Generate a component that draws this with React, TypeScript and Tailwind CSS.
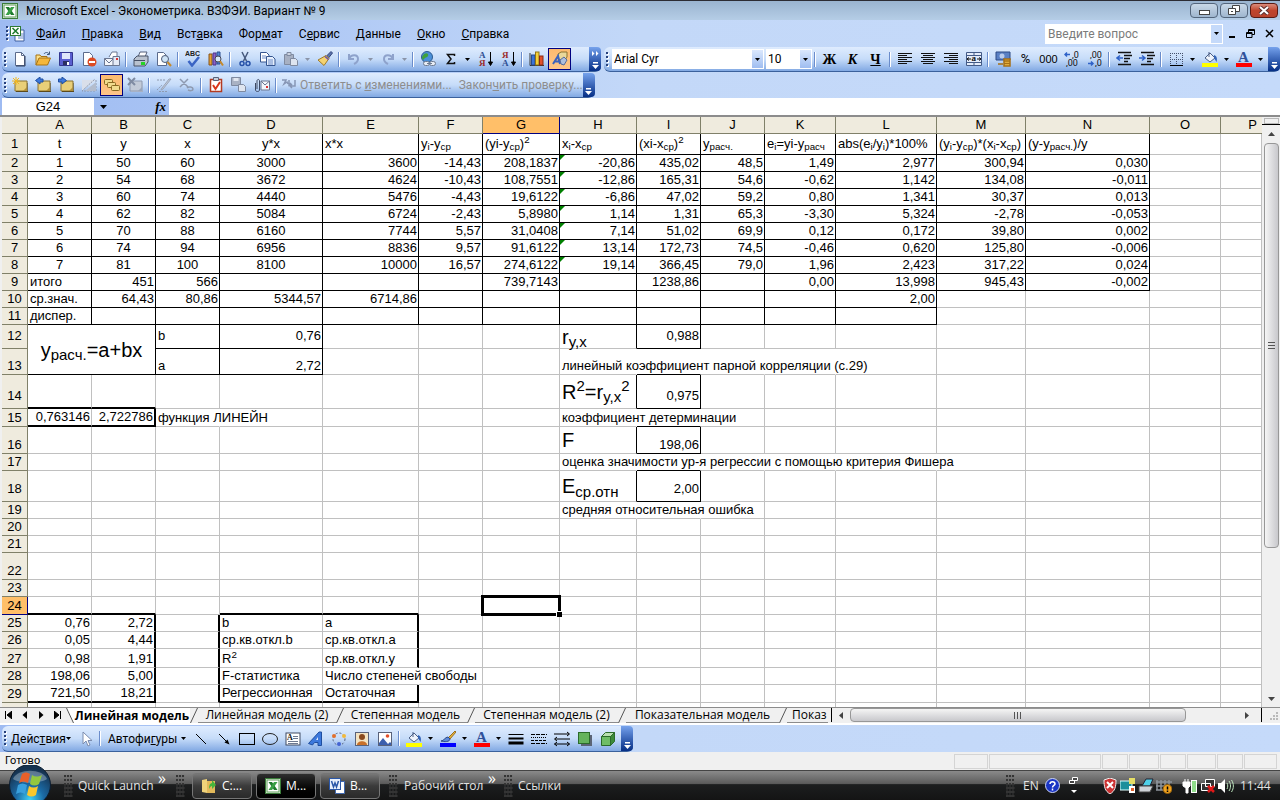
import React from 'react';

type Align = 'l' | 'c' | 'r';
type CellData = { v: React.ReactNode; a: Align; big?: boolean; col?: number; row?: number };

const COLS = ['A', 'B', 'C', 'D', 'E', 'F', 'G', 'H', 'I', 'J', 'K', 'L', 'M', 'N', 'O', 'P'];
const WIDTHS = [64, 64, 64, 103, 96, 64, 77, 77, 64, 64, 71, 101, 89, 124, 71];
const HEIGHTS = [21, 17, 17, 17, 17, 17, 17, 17, 17, 17, 17, 24, 26, 34, 18, 27, 17, 31, 17, 17, 17, 27, 17, 18, 17, 17, 19, 17, 17];

const HEADS: React.ReactNode[] = [
  't', 'y', 'x', 'y*x', 'x*x',
  <>y<sub>i</sub>-y<sub>ср</sub></>,
  <>(yi-y<sub>ср</sub>)<sup>2</sup></>,
  <>x<sub>i</sub>-x<sub>ср</sub></>,
  <>(xi-x<sub>ср</sub>)<sup>2</sup></>,
  <>y<sub>расч.</sub></>,
  <>e<sub>i</sub>=yi-y<sub>расч</sub></>,
  <>abs(e<sub>i</sub>/y<sub>i</sub>)*100%</>,
  <>(y<sub>i</sub>-y<sub>ср</sub>)*(x<sub>i</sub>-x<sub>ср</sub>)</>,
  <>(y-y<sub>расч.</sub>)/y</>,
];

const SERIES = [
  ['1', '50', '60', '3000', '3600', '-14,43', '208,1837', '-20,86', '435,02', '48,5', '1,49', '2,977', '300,94', '0,030'],
  ['2', '54', '68', '3672', '4624', '-10,43', '108,7551', '-12,86', '165,31', '54,6', '-0,62', '1,142', '134,08', '-0,011'],
  ['3', '60', '74', '4440', '5476', '-4,43', '19,6122', '-6,86', '47,02', '59,2', '0,80', '1,341', '30,37', '0,013'],
  ['4', '62', '82', '5084', '6724', '-2,43', '5,8980', '1,14', '1,31', '65,3', '-3,30', '5,324', '-2,78', '-0,053'],
  ['5', '70', '88', '6160', '7744', '5,57', '31,0408', '7,14', '51,02', '69,9', '0,12', '0,172', '39,80', '0,002'],
  ['6', '74', '94', '6956', '8836', '9,57', '91,6122', '13,14', '172,73', '74,5', '-0,46', '0,620', '125,80', '-0,006'],
  ['7', '81', '100', '8100', '10000', '16,57', '274,6122', '19,14', '366,45', '79,0', '1,96', '2,423', '317,22', '0,024'],
];

const cells: Record<string, CellData> = {
  A9: { v: 'итого', a: 'l' }, B9: { v: '451', a: 'r' }, C9: { v: '566', a: 'r' }, G9: { v: '739,7143', a: 'r' },
  I9: { v: '1238,86', a: 'r' }, K9: { v: '0,00', a: 'r' }, L9: { v: '13,998', a: 'r' }, M9: { v: '945,43', a: 'r' }, N9: { v: '-0,002', a: 'r' },
  A10: { v: 'ср.знач.', a: 'l' }, B10: { v: '64,43', a: 'r' }, C10: { v: '80,86', a: 'r' }, D10: { v: '5344,57', a: 'r' },
  E10: { v: '6714,86', a: 'r' }, L10: { v: '2,00', a: 'r' },
  A11: { v: 'диспер.', a: 'l' },
  A12: { v: <>y<sub>расч.</sub>=a+bx</>, a: 'c', big: true, col: 2, row: 2 },
  C12: { v: 'b', a: 'l' }, D12: { v: '0,76', a: 'r' }, H12: { v: <>r<sub>y,x</sub></>, a: 'l', big: true }, I12: { v: '0,988', a: 'r' },
  C13: { v: 'a', a: 'l' }, D13: { v: '2,72', a: 'r' }, H13: { v: 'линейный коэффициент парной корреляции (с.29)', a: 'l' },
  H14: { v: <>R<sup>2</sup>=r<sub>y,x</sub><sup>2</sup></>, a: 'l', big: true }, I14: { v: '0,975', a: 'r' },
  A15: { v: '0,763146', a: 'r' }, B15: { v: '2,722786', a: 'r' }, C15: { v: 'функция ЛИНЕЙН', a: 'l' }, H15: { v: 'коэффициент детерминации', a: 'l' },
  H16: { v: 'F', a: 'l', big: true }, I16: { v: '198,06', a: 'r' },
  H17: { v: 'оценка значимости ур-я регрессии с помощью критерия Фишера', a: 'l' },
  H18: { v: <>E<sub>ср.отн</sub></>, a: 'l', big: true }, I18: { v: '2,00', a: 'r' },
  H19: { v: 'средняя относительная ошибка', a: 'l' },
  A25: { v: '0,76', a: 'r' }, B25: { v: '2,72', a: 'r' }, D25: { v: 'b', a: 'l' }, E25: { v: 'a', a: 'l' },
  A26: { v: '0,05', a: 'r' }, B26: { v: '4,44', a: 'r' }, D26: { v: 'ср.кв.откл.b', a: 'l' }, E26: { v: 'ср.кв.откл.a', a: 'l' },
  A27: { v: '0,98', a: 'r' }, B27: { v: '1,91', a: 'r' }, D27: { v: <>R<sup>2</sup></>, a: 'l' }, E27: { v: 'ср.кв.откл.y', a: 'l' },
  A28: { v: '198,06', a: 'r' }, B28: { v: '5,00', a: 'r' }, D28: { v: 'F-статистика', a: 'l' }, E28: { v: 'Число степеней свободы', a: 'l' },
  A29: { v: '721,50', a: 'r' }, B29: { v: '18,21', a: 'r' }, D29: { v: 'Регрессионная', a: 'l' }, E29: { v: 'Остаточная', a: 'l' },
};
HEADS.forEach((v, i) => { cells[COLS[i] + '1'] = { v, a: i < 4 ? 'c' : 'l' }; });
SERIES.forEach((line, r) => line.forEach((v, i) => { cells[COLS[i] + (r + 2)] = { v, a: i < 4 ? 'c' : 'r' }; }));

const MERGED = ['B12', 'A13', 'B13'];
const BLACK_RIGHT = ['A12', 'C12', 'D12', 'C13', 'D13', 'H12', 'I12', 'H14', 'I14', 'H16', 'I16', 'H18', 'I18'];
const BLACK_BOTTOM = ['A12', 'C12', 'D12', 'C13', 'D13', 'I12', 'I13', 'I14', 'I15', 'I16', 'I17', 'I18'];
const THICK_RIGHT = ['B15', 'B25', 'B26', 'B27', 'B28', 'B29', 'C25', 'C26', 'C27', 'C28', 'C29', 'E25', 'E26', 'E27', 'E29'];
const THICK_BOTTOM = ['A14', 'B14', 'A15', 'B15', 'A24', 'B24', 'D24', 'E24', 'A29', 'B29', 'D29', 'E29'];
// long texts run over the lines of their neighbours
const NO_RIGHT = ['H13', 'I13', 'J13', 'K13', 'C15', 'H15', 'I15', 'H17', 'I17', 'J17', 'K17', 'L17', 'H19', 'I19', 'E28'];
// rows whose texts sit a little above the bottom line
const LIFTED = [12, 14, 18];

const borders = (id: string, row: number, col: number) => {
  const boxed = (row <= 9 && col < 14) || (row <= 11 && col < 12);
  let cls = '';
  if (THICK_RIGHT.includes(id)) cls += 'border-r-2 border-r-black ';
  else if (NO_RIGHT.includes(id)) cls += 'border-r border-r-transparent ';
  else if (boxed || BLACK_RIGHT.includes(id)) cls += 'border-r border-r-black ';
  else cls += 'border-r border-r-[#c0c0c0] ';
  if (THICK_BOTTOM.includes(id)) cls += 'border-b-2 border-b-black';
  else if (boxed || BLACK_BOTTOM.includes(id)) cls += 'border-b border-b-black';
  else cls += 'border-b border-b-[#c0c0c0]';
  return cls;
};

const ALIGN: Record<Align, string> = { l: 'text-left pl-[2px]', c: 'text-center', r: 'text-right pr-px' };

const Cell = ({ row, col }: { row: number; col: number }) => {
  const id = COLS[col] + row;
  if (MERGED.includes(id)) return null;
  const d = cells[id];
  const lift = LIFTED.includes(row) ? 'pb-1' : row === 1 ? 'pb-[2px]' : 'pb-0';
  return (
    <td
      colSpan={d?.col}
      rowSpan={d?.row}
      className={`relative p-0 whitespace-nowrap ${borders(id, row, col)} ${d ? ALIGN[d.a] : ''} ${d?.big ? 'align-middle text-[20px] leading-[22px]' : `align-bottom ${lift}`}`}
    >
      {d?.v}
      {col === 7 && row > 1 && row < 9 && (
        <svg className="absolute left-0 top-0 w-[5px] h-[5px]" viewBox="0 0 5 5"><path d="M0 0h5L0 5z" fill="#008000" /></svg>
      )}
      {id === 'G24' && (
        <span className="absolute -inset-[2px] z-10 border-[3px] border-black">
          <span className="absolute -right-[4px] -bottom-[4px] w-[6px] h-[6px] bg-white"></span>
          <span className="absolute -right-[4px] -bottom-[4px] w-[5px] h-[5px] bg-black"></span>
        </span>
      )}
    </td>
  );
};

const Svg = ({ children }: { children: React.ReactNode }) => (
  <svg className="w-4 h-4 shrink-0" viewBox="0 0 16 16" fill="none">{children}</svg>
);

const Tool = ({ label, active, children }: { label: string; active?: boolean; children: React.ReactNode }) => (
  <button
    aria-label={label}
    className={`w-[23px] h-[22px] shrink-0 flex items-center justify-center ${active ? 'border border-[#000080] bg-gradient-to-b from-[#fdbb6e] to-[#fec589]' : ''}`}
  >
    <Svg>{children}</Svg>
  </button>
);

const Triangle = ({ dim }: { dim?: boolean }) => (
  <svg className="w-[5px] h-[3px] shrink-0" viewBox="0 0 5 3"><path d="M0 0h5L2.5 3z" fill={dim ? '#8a94a8' : '#000'} /></svg>
);

const Drop = ({ label, dim }: { label: string; dim?: boolean }) => (
  <button aria-label={label} className="w-[11px] h-[22px] shrink-0 flex items-center justify-center"><Triangle dim={dim} /></button>
);

const Sep = () => <span className="w-[6px] shrink-0 flex justify-center"><span className="w-[2px] h-[15px] bg-[#6a8ccb] border-r border-white"></span></span>;

const Grip = () => (
  <span className="w-[6px] shrink-0 flex justify-center">
    <svg className="w-[3px] h-[15px]" viewBox="0 0 3 15">
      {[0, 4, 8, 12].map(y => <g key={y}><path d={`M1 ${y + 1}h2v2h-2z`} fill="#fff" /><path d={`M0 ${y}h2v2h-2z`} fill="#27417c" /></g>)}
    </svg>
  </span>
);

const Cap = ({ more }: { more?: boolean }) => (
  <button aria-label="Параметры панелей" className="ml-auto self-stretch w-[12px] shrink-0 rounded-r bg-gradient-to-b from-[#76a2ec] via-[#3b66b8] to-[#062f86] flex flex-col items-center justify-end pb-[2px] gap-[6px]">
    {more && <svg className="w-[7px] h-[5px]" viewBox="0 0 7 5"><path d="M0 0l2.500 2.500L0 5zM4 0l2.500 2.500L4 5z" fill="#fff" /></svg>}
    <svg className="w-[7px] h-[7px]" viewBox="0 0 7 7"><path d="M1 0h5v1.500H1zM0 3h7L3.500 7z" fill="#fff" /></svg>
  </button>
);

const BAR = 'flex items-center rounded-md border-b border-[#3b619c] bg-gradient-to-b from-[#dfecfe] via-[#c6dcf9] to-[#82a9e3]';

const ExcelMark = () => (
  <>
    <rect x="0.500" y="0.500" width="15" height="15" fill="#e9f4e6" stroke="#3b7d3a" />
    <rect x="2" y="2" width="12" height="12" fill="#fff" stroke="#5e9c5a" />
    <path d="M3.500 4h3.500l5.500 8H9z" fill="#1d7a2c" /><path d="M12.500 4H9L3.500 12H7z" fill="#3aa046" />
  </>
);

const Note = ({ dim }: { dim?: boolean }) => (
  <>
    <path d="M3 4h12v10H3z" fill={dim ? '#c3cbd8' : '#e9cf78'} stroke={dim ? '#8e9ab0' : '#8a7330'} />
    <path d="M4 14.500h12V6" stroke={dim ? '#a7b1c4' : '#5b4a1c'} />
    <path d="M11 14l4-4v4z" fill={dim ? '#9aa5b9' : '#b1903a'} />
  </>
);

const Bucket = () => (
  <>
    <path d="M3 7l5-5 5 5-5 4z" fill="#eef3fb" stroke="#4b5f86" /><path d="M7 1v5" stroke="#4b5f86" />
    <path d="M12 4c3 1 3.500 4 2.500 7-1-2-2-3-2.500-4z" fill="#3465b8" />
    <rect y="12" width="16" height="4" fill="#ff0" />
  </>
);

const Glyph = ({ x, y, s, fill, children }: { x: number; y: number; s: number; fill: string; children: string }) => (
  <text x={x} y={y} fontSize={s} fontWeight="700" fill={fill} className="font-['Liberation_Serif',serif]">{children}</text>
);

const Digits = ({ x, y, children }: { x: number; y: number; children: string }) => (
  <text x={x} y={y} fontSize="9" fill="#111" className="font-['Roboto',sans-serif]">{children}</text>
);

const FontColor = () => (
  <>
    <Glyph x={2} y={11} s={15} fill="#2f519a">A</Glyph>
    <rect y="12" width="16" height="4" fill="#f00" />
  </>
);

const SortArrow = () => <path d="M13.500 1v12M11.500 11l2 3.500 2-3.500z" stroke="#000" fill="#000" />;

const StandardBar = () => (
  <div className={`${BAR} w-[599px] h-[25px] shrink-0`} role="toolbar" aria-label="Стандартная">
    <Grip />
    <Tool label="Создать"><path d="M3.500 1.500h6l3 3v10h-9z" fill="#fff" stroke="#5b6b8c" /><path d="M9.500 1.500v3h3" stroke="#5b6b8c" /><path d="M13 5v10H4" stroke="#2e3c5a" /></Tool>
    <Tool label="Открыть"><path d="M1 14V4h4l1 1.500h6V8" fill="#fbe08a" stroke="#a87313" /><path d="M1 14l3-7h11.500l-3 7z" fill="#f5b73c" stroke="#a87313" /><path d="M9 3c1-2 4-2 5 0M14.500 0.500V3.500H12" stroke="#3d587f" /></Tool>
    <Tool label="Сохранить"><path d="M1.500 1.500h13v13h-13z" fill="#5a5fd0" stroke="#34378f" /><path d="M4 2h8v6H4z" fill="#dfe7fa" /><path d="M5 10h6v4H5z" fill="#2b2f62" /><path d="M9 11h2v3H9z" fill="#fff" /></Tool>
    <Tool label="Разрешения"><path d="M2.500 1.500h6l3 3v10h-9z" fill="#fff" stroke="#5b6b8c" /><circle cx="11" cy="11" r="4.500" fill="#dc4a22" /><path d="M8 10h6v2H8z" fill="#fff" /></Tool>
    <Tool label="Сообщение"><path d="M5 6l3-5h5v8" fill="#fff" stroke="#6b7791" /><path d="M0.500 7.500h9v7h-9z" fill="#f4f6fb" stroke="#6b7791" /><path d="M0.500 7.500L5 12l4.500-4.500" stroke="#6b7791" /><path d="M9 5.500h6.500v9H9z" fill="#e4eaf6" stroke="#6b7791" /><rect x="12" y="7" width="2" height="2" fill="#d33" /></Tool>
    <Sep />
    <Tool label="Печать"><path d="M5 6l2-5h7l-2 5" fill="#fff" stroke="#55617c" /><path d="M1 8l3-3h11v6l-3 4H1z" fill="#b9c2cf" stroke="#485267" /><path d="M1 9.500h11" stroke="#485267" /><rect x="8" y="11" width="4" height="3" fill="#25d425" /></Tool>
    <Tool label="Предварительный просмотр"><path d="M1.500 1.500h6l3 3v10h-9z" fill="#fff" stroke="#5b6b8c" /><circle cx="9" cy="8" r="3.500" fill="#cfe4f6" stroke="#4d5b78" /><path d="M11.500 11l3.500 4" stroke="#c68a2b" strokeWidth="2" /></Tool>
    <Sep />
    <Tool label="Орфография"><text x="0" y="5" fontSize="7" fontWeight="700" fill="#222" className="font-['Liberation_Sans',sans-serif]">ABC</text><path d="M3.500 10l3.500 4.500L14 6" stroke="#3a64c4" strokeWidth="2.500" /></Tool>
    <Tool label="Справочные материалы"><path d="M1 3h3v11H1z" fill="#e5a132" stroke="#87551d" /><path d="M5 2h3v12H5z" fill="#8a63c9" stroke="#4d348a" /><path d="M9 1h3v12H9z" fill="#5387d6" stroke="#2a4f91" /><circle cx="10" cy="8" r="3" fill="#d6e9f8" stroke="#445" /><path d="M12 10l3 4.500" stroke="#c68a2b" strokeWidth="2" /></Tool>
    <Sep />
    <Tool label="Вырезать"><path d="M5 1l4.500 9M11 1L6.500 10" stroke="#46597d" strokeWidth="1.500" /><circle cx="5" cy="12.500" r="2" stroke="#2751a8" strokeWidth="1.500" /><circle cx="11" cy="12.500" r="2" stroke="#2751a8" strokeWidth="1.500" /></Tool>
    <Tool label="Копировать"><path d="M0.500 1.500h6l2.500 2.500v7H0.500z" fill="#fff" stroke="#35558f" /><path d="M6.500 5.500h6l2.500 2.500v6.500H6.500z" fill="#e6effc" stroke="#35558f" /><path d="M8 9h5M8 11h5M8 13h5M2 5h4M2 7h4" stroke="#6d8cc8" /></Tool>
    <Tool label="Вставить"><path d="M1.500 3.500h9v10h-9z" fill="#a7b0c2" stroke="#7f8aa0" /><path d="M4 1.500h4v3H4z" fill="#ccd3e0" stroke="#7f8aa0" /><path d="M7.500 7.500h5l2 2v5h-7z" fill="#dde4f0" stroke="#7f8aa0" /></Tool>
    <Drop label="Варианты вставки" dim />
    <Tool label="Формат по образцу"><path d="M14 0.500l1.500 1.500-4 5-2-2z" fill="#5b74ae" stroke="#35477b" /><path d="M9 4.500l3 3-5 7L1 9z" fill="#f4d271" stroke="#a07a27" /><path d="M8 5.500l3.500 3" stroke="#6a4fb0" strokeWidth="1.500" /></Tool>
    <Sep />
    <Tool label="Отменить"><path d="M3 3v5h5M3 8c2-5 9-5 9 0 0 3-2 4-4 5" stroke="#8ea2cb" strokeWidth="2" /></Tool>
    <Drop label="Список отмены" dim />
    <Tool label="Вернуть"><path d="M13 3v5H8M13 8c-2-5-9-5-9 0 0 3 2 4 4 5" stroke="#8ea2cb" strokeWidth="2" /></Tool>
    <Drop label="Список возврата" dim />
    <Sep />
    <Tool label="Гиперссылка"><circle cx="7" cy="6" r="5.500" fill="#4a90d9" stroke="#2b5b90" /><path d="M4 3c3-2 5 0 4 2s-3 1-4 3-2 0-2-2z" fill="#3fa13c" /><rect x="3.500" y="10.500" width="6" height="4" rx="2" fill="#e8edf5" stroke="#6e7b90" /><rect x="9.500" y="10.500" width="6" height="4" rx="2" fill="#e8edf5" stroke="#6e7b90" /><path d="M7 12.500h5" stroke="#6e7b90" /></Tool>
    <Tool label="Автосумма"><path d="M11.500 5V3.500h-7L8 8l-3.500 4.500h7V11" stroke="#111" strokeWidth="1.500" /></Tool>
    <Drop label="Функции" />
    <Tool label="По возрастанию"><Glyph x={2} y={7} s={9} fill="#2d4f93">А</Glyph><Glyph x={2} y={15} s={9} fill="#9b2b2b">Я</Glyph><SortArrow /></Tool>
    <Tool label="По убыванию"><Glyph x={2} y={7} s={9} fill="#9b2b2b">Я</Glyph><Glyph x={2} y={15} s={9} fill="#2d4f93">А</Glyph><SortArrow /></Tool>
    <Sep />
    <Tool label="Мастер диаграмм"><path d="M1 2v12.500h14" stroke="#333" /><rect x="2.500" y="4" width="3.500" height="10" fill="#3c74d6" stroke="#274a8c" /><rect x="6.500" y="1" width="3.500" height="13" fill="#f6cf3a" stroke="#8f7415" /><rect x="10.500" y="5" width="3.500" height="9" fill="#e2502b" stroke="#8a2b14" /></Tool>
    <Tool label="Рисование" active><path d="M6 3l3-2h6v5l-2 3H7z" fill="#e9d79a" stroke="#8a7330" /><path d="M1 13L6 5l2 8M3 10.500h4" stroke="#3c62bd" strokeWidth="2" /><path d="M8 9l4-3 3 3-3 5-3-1z" fill="#aebedc" stroke="#56699a" /></Tool>
    <Cap more />
  </div>
);

const FormatBar = () => (
  <div className={`${BAR} flex-1 min-w-0 h-[25px]`} role="toolbar" aria-label="Форматирование">
    <Grip />
    <label className="relative ml-[2px] w-[152px] h-[20px] bg-white flex shrink-0">
      <select aria-label="Шрифт" className="appearance-none w-full px-[2px] text-[12px] leading-[20px] bg-transparent"><option>Arial Cyr</option></select>
      <span className="absolute right-px inset-y-px w-[11px] justify-center bg-gradient-to-b from-[#dbe8fd] to-[#9fbdf0] flex items-center pointer-events-none"><Triangle /></span>
    </label>
    <label className="relative ml-[2px] w-[46px] h-[20px] bg-white flex shrink-0">
      <select aria-label="Размер" className="appearance-none w-full px-[2px] text-[12px] leading-[20px] bg-transparent"><option>10</option></select>
      <span className="absolute right-px inset-y-px w-[11px] justify-center bg-gradient-to-b from-[#dbe8fd] to-[#9fbdf0] flex items-center pointer-events-none"><Triangle /></span>
    </label>
    <Sep />
    <button className="w-[23px] text-center font-bold font-['Liberation_Serif',serif] text-[14px]">Ж</button>
    <button className="w-[23px] text-center font-bold italic font-['Liberation_Serif',serif] text-[14px]">К</button>
    <button className="w-[23px] text-center font-bold underline font-['Liberation_Serif',serif] text-[14px]">Ч</button>
    <Sep />
    <Tool label="По левому краю"><path d="M1 2.500h14M1 4.500h9M1 6.500h14M1 8.500h9M1 10.500h14M1 12.500h9" stroke="#111" /></Tool>
    <Tool label="По центру"><path d="M1 2.500h14M3 4.500h10M1 6.500h14M3 8.500h10M1 10.500h14M3 12.500h10" stroke="#111" /></Tool>
    <Tool label="По правому краю"><path d="M1 2.500h14M6 4.500h9M1 6.500h14M6 8.500h9M1 10.500h14M6 12.500h9" stroke="#111" /></Tool>
    <Tool label="Объединить и поместить в центре"><path d="M0.500 1.500h15v13H0.500zM0.500 4.500h15M0.500 11.500h15M8 1v3M8 12v3" fill="#e4ecfa" stroke="#435a86" /><path d="M1 8h4M15 8h-4M3 6.500L1 8l2 1.500M13 6.500L15 8l-2 1.500" stroke="#111" /><Glyph x={5.5} y={10} s={9} fill="#111">a</Glyph></Tool>
    <Sep />
    <Tool label="Денежный формат"><path d="M1 1h14v8H1z" fill="#5a80c4" stroke="#2c4a86" /><circle cx="7" cy="5" r="2.500" fill="#b9cbec" /><path d="M9 8h6v7H9zM9 10h6M9 12.500h6M3 13h5" fill="#f2c14b" stroke="#a66f15" strokeWidth="1.500" /></Tool>
    <button className="w-[23px] text-center text-[13px]">%</button>
    <button className="w-[23px] text-center text-[11px] font-['Liberation_Sans_Narrow','Liberation_Sans',sans-serif]">000</button>
    <Tool label="Увеличить разрядность"><path d="M6 3.500H1M3 1.500l-2 2 2 2" stroke="#2f62c8" strokeWidth="1.500" /><Digits x={8} y={7}>,0</Digits><Digits x={2} y={15}>,00</Digits></Tool>
    <Tool label="Уменьшить разрядность"><path d="M1 12.500h5M4 10.500l2 2-2 2" stroke="#2f62c8" strokeWidth="1.500" /><Digits x={3} y={7}>,00</Digits><Digits x={8} y={15}>,0</Digits></Tool>
    <Sep />
    <Tool label="Уменьшить отступ"><path d="M2 1.500h13M8 4.500h8M8 7.500h6M8 10.500h4M2 13.500h13" stroke="#111" strokeWidth="1.500" /><path d="M7 7H2M4 4.500L1 7l3 2.500" stroke="#2f62c8" strokeWidth="1.500" /></Tool>
    <Tool label="Увеличить отступ"><path d="M2 1.500h13M8 4.500h8M8 7.500h6M8 10.500h4M2 13.500h13" stroke="#111" strokeWidth="1.500" /><path d="M0 7h5M3 4.500L6 7 3 9.500" stroke="#2f62c8" strokeWidth="1.500" /></Tool>
    <Sep />
    <Tool label="Границы"><path d="M2.500 2v12M8.500 2v12M14.500 2v12M2 2.500h13M2 8.500h13" stroke="#44506c" strokeDasharray="1 1" /><path d="M2 14.500h13" stroke="#000" /></Tool>
    <Drop label="Виды границ" />
    <Tool label="Цвет заливки"><Bucket /></Tool>
    <Drop label="Цвета заливки" />
    <Tool label="Цвет шрифта"><FontColor /></Tool>
    <Drop label="Цвета шрифта" />
    <Cap />
  </div>
);

const ReviewBar = () => (
  <div className={`${BAR} w-[592px] h-[25px]`} role="toolbar" aria-label="Рецензирование">
    <Grip />
    <Tool label="Создать примечание"><Note /><path d="M4 0v8M0 4h8M1 1l6 6M7 1L1 7" stroke="#f4b81e" /></Tool>
    <Tool label="Предыдущее примечание"><Note /><path d="M8 2H5V0L0.500 3.500 5 7V5h3z" fill="#3c78dc" stroke="#1f4e9f" /></Tool>
    <Tool label="Следующее примечание"><Note /><path d="M0.500 2H4V0l4.500 3.500L4 7V5H0.500z" fill="#3c78dc" stroke="#1f4e9f" /></Tool>
    <Tool label="Показать примечание"><path d="M1 14V3h14z" fill="#d9dfea" /><path d="M1 14L14 2M15 3v11H1" stroke="#8e9ab0" strokeDasharray="2 1" /><path d="M4 14l11-9v9z" fill="#b4bdcd" /></Tool>
    <Tool label="Показать все примечания" active><rect x="0.500" y="2.500" width="8" height="5" rx="1" fill="#f1dc8e" stroke="#8a6a22" /><rect x="3.500" y="5.500" width="8" height="5" rx="1" fill="#f1dc8e" stroke="#8a6a22" /><rect x="7.500" y="8.500" width="8" height="5" rx="1" fill="#f1dc8e" stroke="#8a6a22" /></Tool>
    <Tool label="Удалить примечание"><Note dim /><path d="M1 1l7 7M8 1L1 8" stroke="#7f8ba2" strokeWidth="2" /></Tool>
    <Sep />
    <Tool label="Рукописные примечания"><path d="M1 3h9M1 13l5-5M3 14.500h9" stroke="#8e9ab0" strokeDasharray="2 1" /><path d="M15 2l-8 10-2 1 1-2 7-9z" fill="#c3cbd8" stroke="#9aa5b9" /></Tool>
    <Tool label="Удалить рукописные"><path d="M1 2l8 8M9 2L1 10M8 11c2-2 6-1 6 1s-3 2-5 1" stroke="#8e9ab0" strokeWidth="1.500" /></Tool>
    <Sep />
    <Tool label="Создать задачу"><path d="M2.500 2.500h11v12h-11z" fill="#fff" stroke="#b23b21" strokeWidth="1.500" /><path d="M5.500 0.500h5v3h-5z" fill="#c9cfdb" stroke="#59627a" /><path d="M5 8l2.500 4L12 5" stroke="#d9361a" strokeWidth="2" /></Tool>
    <Tool label="Обновить файл"><path d="M0.500 0.500h9v8h-9z" fill="#a9b2c3" stroke="#7f8aa0" /><path d="M2.500 1h5v3h-5z" fill="#e1e6ef" /><path d="M7.500 7.500h5l2 2v5h-7z" fill="#dfe5ef" stroke="#7f8aa0" /></Tool>
    <Tool label="Отправить"><path d="M7 4h8.500v9H7z" fill="#f4f6fb" stroke="#6b7791" /><path d="M7 4l4 4 4.500-4" stroke="#6b7791" /><rect x="12" y="9" width="2" height="2" fill="#d33" /><path d="M1.500 6v7c0 2 4 2 4 0V4c0-2-2.500-2-2.500 0v8" stroke="#3e4a63" /></Tool>
    <Sep />
    <button disabled className="flex items-center h-[22px] text-[12px] text-[#8d8d8d] whitespace-nowrap pl-[2px]">
      <Svg><path d="M1 3h4l-2 4 3-2 1 2M8 3v5l2-2M14 3v6H9M11 7L9 9l2 2" stroke="#8796b5" strokeWidth="1.500" /></Svg>
      <span className="pl-[3px]">Ответить с <u>и</u>зменениями...</span>
    </button>
    <button disabled className="pl-[7px] h-[22px] text-[12px] text-[#8d8d8d] whitespace-nowrap">Закон<u>ч</u>ить проверку...</button>
    <Cap />
  </div>
);

const DrawingBar = () => (
  <div className={`${BAR} w-[631px] h-[26px]`} role="toolbar" aria-label="Рисование">
    <Grip />
    <button className="w-[66px] text-[12px] whitespace-nowrap flex items-center justify-between px-[3px]"><span>Дейс<u>т</u>вия</span><Triangle /></button>
    <Tool label="Выбор объектов"><path d="M5 1v12l3-3 2 5 2-1-2-4.500h4z" fill="#fff" stroke="#7b8cae" /></Tool>
    <Sep />
    <button className="w-[86px] text-[12px] whitespace-nowrap flex items-center justify-between pl-[5px] pr-[3px]"><span>Автофи<u>г</u>уры</span><Triangle /></button>
    <Tool label="Линия"><path d="M3 3l10 10" stroke="#000" /></Tool>
    <Tool label="Стрелка"><path d="M3 3l8 8" stroke="#000" /><path d="M13.500 13.500l-5-2 3-3z" fill="#000" /></Tool>
    <Tool label="Прямоугольник"><rect x="0.500" y="2.500" width="15" height="11" stroke="#000" /></Tool>
    <Tool label="Овал"><ellipse cx="8" cy="8" rx="7.500" ry="5.500" stroke="#222" /></Tool>
    <Tool label="Надпись"><rect x="1" y="2" width="14" height="12" fill="#fff" stroke="#3e4a63" /><Glyph x={2} y={9} s={8} fill="#111">A</Glyph><path d="M8 5.500h5M8 7.500h5M3 10.500h10M3 12.500h10" stroke="#6d7890" /></Tool>
    <Tool label="Объект WordArt"><path d="M0.500 12.500L11 1h2.500v13.500H10v-3H6.500l-2 2.500z" fill="#3c78dc" stroke="#1f4e9f" /><path d="M8 9h2V6z" fill="#dfeafc" /></Tool>
    <Tool label="Схема"><circle cx="8" cy="8" r="6" stroke="#55617c" strokeDasharray="2 2" /><circle cx="3" cy="5" r="2" fill="#e2702b" /><circle cx="13" cy="5" r="2" fill="#f2b93b" /><circle cx="8" cy="13" r="2" fill="#4464d4" /></Tool>
    <Tool label="Картинка"><rect x="1.500" y="1.500" width="13" height="13" fill="#f3e3c2" stroke="#59627a" /><circle cx="8" cy="6" r="3" fill="#8a4a1e" /><path d="M3 14c0-5 10-5 10 0z" fill="#c8702a" /></Tool>
    <Tool label="Рисунок"><rect x="1.500" y="1.500" width="13" height="13" fill="#fff" stroke="#59627a" /><circle cx="10.500" cy="5" r="1.800" fill="#e2502b" /><path d="M2 12l4-5 5 6 2-2 1 1v2H2z" fill="#3c5fae" /></Tool>
    <Sep />
    <Tool label="Цвет заливки фигуры"><Bucket /></Tool>
    <Drop label="Цвета заливки фигуры" />
    <Tool label="Цвет линий"><path d="M15 0l1 1-6 7-2-1z" fill="#e5b23c" stroke="#9a7020" /><path d="M1 10c3 0 4-4 7-4l2 2c0 3-6 3-9 2z" fill="#5d88d8" stroke="#2c4a86" /><rect y="12" width="16" height="4" fill="#00f" /></Tool>
    <Drop label="Цвета линий" />
    <Tool label="Цвет текста"><FontColor /></Tool>
    <Drop label="Цвета текста" />
    <Tool label="Тип линии"><path d="M0.500 3.500h15" stroke="#000" /><path d="M0.500 7.500h15" stroke="#000" strokeWidth="2" /><path d="M0.500 12h15" stroke="#000" strokeWidth="3" /></Tool>
    <Tool label="Тип штриха"><path d="M0 3.500h16M0 12.500h16" stroke="#000" strokeDasharray="4 1" /><path d="M0 6.500h16" stroke="#000" strokeDasharray="1 1" /><path d="M0 9.500h16" stroke="#000" strokeDasharray="3 1" /></Tool>
    <Tool label="Вид стрелки"><path d="M0 3h15M13 1l2.500 2L13 5M16 8H1M3 6L.5 8 3 10M0.500 13h15M13 11l2.500 2-2.500 2M3 11L.5 13 3 15" stroke="#000" /></Tool>
    <Tool label="Тень"><rect x="4" y="4" width="11" height="11" fill="#5b6475" /><rect x="1.500" y="1.500" width="11" height="11" fill="#64b35d" stroke="#2b6b2b" /></Tool>
    <Tool label="Объем"><path d="M1.500 5.500h9v9h-9z" fill="#6fbd66" stroke="#2b6b2b" /><path d="M1.500 5.500l4-4h9l-4 4z" fill="#b9e0b0" stroke="#2b6b2b" /><path d="M10.500 14.500l4-4v-9l-4 4z" fill="#3c8a3a" stroke="#2b6b2b" /></Tool>
    <Cap />
  </div>
);

const MENU: [string, string, string][] = [
  ['', 'Ф', 'айл'], ['', 'П', 'равка'], ['', 'В', 'ид'], ['Вст', 'а', 'вка'], ['Фор', 'м', 'ат'],
  ['С', 'е', 'рвис'], ['', 'Д', 'анные'], ['', 'О', 'кно'], ['', 'С', 'правка'],
];

const Header = () => (
  <header>
    <div className="h-[20px] flex items-center border-t border-[#2c2c34] bg-gradient-to-b from-[#9ab4d0] to-[#b5cde6] pr-[2px]">
      <span className="pl-[2px] flex"><Svg><ExcelMark /></Svg></span>
      <h1 className="flex-1 pl-2 text-[12px] leading-[18px]">Microsoft Excel - Эконометрика. ВЗФЭИ. Вариант № 9</h1>
      <div className="flex gap-[2px]">
        <button aria-label="Свернуть" className="w-[28px] h-[15px] rounded-sm border border-[#53657c] bg-gradient-to-b from-[#c9d8e8] to-[#9fb6cf] flex justify-center items-end pb-[2px]"><span className="w-[11px] h-[5px] border border-[#444] bg-white"></span></button>
        <button aria-label="Развернуть" className="w-[28px] h-[15px] rounded-sm border border-[#53657c] bg-gradient-to-b from-[#c9d8e8] to-[#9fb6cf] flex justify-center items-center"><svg className="w-[12px] h-[11px]" viewBox="0 0 12 11"><path d="M4.500 0.500h7v6h-7z" fill="#fff" stroke="#444" /><path d="M0.500 3.500h7v6h-7z" fill="#fff" stroke="#444" /><path d="M3 6h2v1H3z" fill="#444" /></svg></button>
        <button aria-label="Закрыть" className="w-[28px] h-[15px] rounded-sm border border-[#5a1a12] bg-gradient-to-b from-[#d98b7c] via-[#c0452c] to-[#b8432c] flex justify-center items-center"><svg className="w-[12px] h-[9px]" viewBox="0 0 12 9"><path d="M2 1l8 7M10 1L2 8" stroke="#5a3030" strokeWidth="4" /><path d="M2 1l8 7M10 1L2 8" stroke="#fff" strokeWidth="2" /></svg></button>
      </div>
    </div>
    <div className="bg-gradient-to-r from-[#9ebbf2] via-[#c3d8f8] to-[#c5dafa]">
      <nav className="h-[27px] flex items-center pl-[4px]">
        <Grip />
        <span className="flex w-[18px]"><Svg><path d="M5 4h9v11H5z" fill="#fff" stroke="#3f5f9f" /><path d="M8 8h6M8 10h6M8 12h6" stroke="#6d8cc8" /><rect x="0.500" y="0.500" width="10" height="9" fill="#fff" stroke="#2f7a35" /><path d="M2.500 2l6 6M8.500 2l-6 6" stroke="#1d7a2c" strokeWidth="1.500" /></Svg></span>
        <ul className="flex text-[12px] leading-[18px] pl-[8px] gap-[16px]">
          {MENU.map(([a, b, c]) => <li key={a + b + c}><button>{a}<u>{b}</u>{c}</button></li>)}
        </ul>
        <label className="relative ml-auto w-[178px] h-[20px] bg-white flex">
          <input aria-label="Введите вопрос" placeholder="Введите вопрос" className="w-full px-[3px] text-[12px] leading-[18px] placeholder:text-[#7b7b7b]" />
          <span className="absolute right-px inset-y-px w-[11px] justify-center bg-[#c5dafa] flex items-center"><Triangle /></span>
        </label>
        <div className="flex items-center gap-[10px] pl-[5px] pr-[6px]">
          <button aria-label="Свернуть книгу"><svg className="w-[8px] h-[9px]" viewBox="0 0 8 9"><path d="M1 7h6v2H1z" fill="#000" /></svg></button>
          <button aria-label="Восстановить книгу"><svg className="w-[9px] h-[9px]" viewBox="0 0 9 9" fill="none"><path d="M2.500 3V.5h6v5H6M2 1.500h6M.5 3.500H6v5H.5zM0 4.500h6" stroke="#000" /></svg></button>
          <button aria-label="Закрыть книгу"><svg className="w-[9px] h-[9px]" viewBox="0 0 9 9"><path d="M1 1l7 7M8 1L1 8" stroke="#000" strokeWidth="1.500" /></svg></button>
        </div>
      </nav>
      <div className="flex gap-[3px] pl-[2px]"><StandardBar /><FormatBar /></div>
      <div className="pl-[2px] pt-px"><ReviewBar /></div>
      <div className="h-[17px] flex">
        <input aria-label="Имя" defaultValue="G24" className="w-[92px] ml-[2px] bg-white text-center text-[13px] leading-[16px] font-['Liberation_Sans',Arial,sans-serif]" />
        <span className="w-[18px] flex justify-center items-center"><svg className="w-[7px] h-[4px]" viewBox="0 0 7 4"><path d="M0 0h7L3.500 4z" fill="#000" /></svg></span>
        <button aria-label="Вставка функции" className="w-[57px] pr-[3px] text-right italic font-bold text-[13px] leading-[16px] font-['Liberation_Serif',serif]">fx</button>
        <input aria-label="Строка формул" className="flex-1 bg-white" />
      </div>
    </div>
  </header>
);

const HEAD = 'border-[#808069] font-normal p-0';

const Sheet = () => (
  <div className="flex border-t-2 border-[#8c8c8c] pl-[2px] bg-[#f0f0f0] font-['Liberation_Sans',Arial,sans-serif] text-[13px] leading-[16px]">
    <table className="flex-1 min-w-0 w-full table-fixed border-separate border-spacing-0 bg-white">
      <colgroup>
        <col className="w-[26px]" />
        {WIDTHS.map((w, i) => <col key={i} style={{ width: w }} />)}
        <col />
      </colgroup>
      <thead>
        <tr className="h-[17px] bg-[#efebde]">
          <th className={`${HEAD} border-r border-b`}></th>
          {COLS.map(c => (
            <th key={c} scope="col" className={`${HEAD} border-b ${c === 'P' ? 'pl-[22px]' : 'border-r'} ${c === 'G' ? 'bg-[#ffbf69] border-b-[#000080] border-r-[#000080]' : ''}`}>{c}</th>
          ))}
        </tr>
      </thead>
      <tbody>
        {HEIGHTS.map((h, i) => (
          <tr key={i} style={{ height: h }}>
            <th scope="row" className={`${HEAD} border-r border-b align-bottom ${LIFTED.includes(i + 1) ? 'pb-1' : i === 0 ? 'pb-[2px]' : ''} ${i === 23 ? 'bg-[#ffbf69] border-b-[#000080] border-r-[#000080]' : 'bg-[#efebde]'}`}>{i + 1}</th>
            {COLS.map((c, j) => <Cell key={c} row={i + 1} col={j} />)}
          </tr>
        ))}
        <tr className="h-[4px]">
          <th className={`${HEAD} border-r bg-[#efebde]`}></th>
          {COLS.map(c => <td key={c} className="p-0 border-r border-[#c0c0c0]"></td>)}
        </tr>
      </tbody>
    </table>
    <div className="w-[18px] shrink-0 flex flex-col items-center">
      <span className="w-[15px] h-[6px] mt-px border border-[#b8b8b8] bg-[#f0f0f0]"></span>
      <span className="w-full h-px bg-black"></span>
      <button aria-label="Вверх" className="w-full h-[18px] flex justify-center items-center"><svg className="w-[7px] h-[4px]" viewBox="0 0 7 4"><path d="M0 4h7L3.500 0z" fill="#444" /></svg></button>
      <button aria-label="Прокрутка" className="w-[15px] h-[405px] border border-[#979797] rounded-sm bg-gradient-to-r from-[#f5f5f5] to-[#c8c8cc] flex items-center justify-center">
        <svg className="w-[7px] h-[8px]" viewBox="0 0 7 8"><path d="M0 .5h7M0 3.500h7M0 6.500h7" stroke="#555" /></svg>
      </button>
      <button aria-label="Вниз" className="mt-auto w-full h-[16px] flex justify-center items-center"><svg className="w-[7px] h-[4px]" viewBox="0 0 7 4"><path d="M0 0h7L3.500 4z" fill="#444" /></svg></button>
    </div>
  </div>
);

const Slash = ({ back }: { back?: boolean }) => (
  <svg className="w-[8px] h-[15px] shrink-0" viewBox="0 0 8 15"><path d={back ? 'M0 0l7 15h1V0z' : 'M0 0h8L1 15H0z'} fill={back ? '#fff' : 'none'} /><path d={back ? 'M0.500 0l7 15' : 'M7.500 0l-7 15'} stroke="#555" /></svg>
);

const SHEETS: [string, string][] = [
  ['Линейная модель (2)', 'w-[138px]'],
  ['Степенная модель', 'w-[123px]'],
  ['Степенная модель (2)', 'w-[143px]'],
  ['Показательная модель', 'w-[153px]'],
];

const TabBar = () => (
  <div className="h-[18px] flex items-start border-t border-[#8c8c8c] bg-[#f0f0f0] border-b-2 border-b-white text-[12px] leading-[14px]">
    <div className="flex w-[66px] h-[14px] items-center justify-around shrink-0">
      {['M1.500 0v8M8 0v8L3 4z', 'M6 0v8L1.500 4z', 'M2 0v8L6.500 4z', 'M6.500 0v8M0 0v8l5-4z'].map((d, i) => (
        <button key={d} aria-label={['К первому листу', 'Назад', 'Вперед', 'К последнему листу'][i]}><svg className="w-[8px] h-[8px]" viewBox="0 0 8 8"><path d={d} fill="#000" stroke={i % 3 === 0 ? '#000' : 'none'} strokeWidth="1" /></svg></button>
      ))}
    </div>
    <Slash back />
    <button className="w-[116px] h-[15px] shrink-0 bg-white font-bold whitespace-nowrap text-center">Линейная модель</button>
    <Slash />
    {SHEETS.map(([name, w]) => (
      <React.Fragment key={name}>
        <button className={`${w} shrink-0 whitespace-nowrap text-center border-b border-[#8c8c8c]`}>{name}</button>
        <Slash />
      </React.Fragment>
    ))}
    <button className="w-[41px] shrink-0 pl-[5px] text-left whitespace-nowrap border-b border-[#8c8c8c]">Показ</button>
    <span className="w-[4px] h-[14px] shrink-0 border-r border-black"></span>
    <div className="flex-1 flex h-[14px] items-center min-w-0">
      <button aria-label="Влево" className="w-[18px] flex justify-center"><svg className="w-[4px] h-[7px]" viewBox="0 0 4 7"><path d="M4 0v7L0 3.500z" fill="#444" /></svg></button>
      <button aria-label="Прокрутка листа" className="flex-[333] h-full rounded-sm border border-[#979797] bg-gradient-to-b from-[#f5f5f5] to-[#c8c8cc] flex items-center justify-center"><svg className="w-[8px] h-[7px]" viewBox="0 0 8 7"><path d="M.5 0v7M3.500 0v7M6.500 0v7" stroke="#555" /></svg></button>
      <span className="flex-[52]"></span>
      <button aria-label="Вправо" className="w-[18px] flex justify-center"><svg className="w-[4px] h-[7px]" viewBox="0 0 4 7"><path d="M0 0v7l4-3.500z" fill="#444" /></svg></button>
      <span className="w-[6px] h-full border-r border-black"></span>
    </div>
    <svg className="w-[18px] h-[14px] shrink-0" viewBox="0 0 18 14"><path d="M14 4h2v2h-2zM11 7h2v2h-2zM14 7h2v2h-2zM8 10h2v2H8zM11 10h2v2h-2zM14 10h2v2h-2z" fill="#b9b9b9" /></svg>
  </div>
);

const Dots = () => (
  <svg className="w-[9px] h-[22px] shrink-0" viewBox="0 0 9 22">
    {[0, 4, 8, 12, 16, 20].map(y => [0, 3, 6].map(x => <path key={`${x}-${y}`} d={`M${x} ${y}h2v2h-2z`} fill="#1a1a1a" stroke="#666" strokeWidth=".4" />))}
  </svg>
);

const TASK = 'w-[60px] h-[26px] rounded-sm border border-[#767676] flex items-center gap-[5px] pl-[8px] text-white';

const Taskbar = () => (
  <footer className="h-[30px] flex items-center border-t border-[#444] bg-[linear-gradient(#8a8a8a,#5c5c5c_43%,#1c1e1f_47%,#141414)] text-[#e4e4e4] text-[12px] font-['Open_Sans','Noto_Sans',sans-serif]">
    <button aria-label="Пуск" className="relative w-[64px] self-stretch shrink-0">
      <svg className="absolute left-[8px] -top-[6px] w-[44px] h-[36px]" viewBox="0 0 44 36">
        <defs>
          <radialGradient id="orb" cx="50%" cy="85%" r="75%"><stop offset="0" stopColor="#3fd0f5" /><stop offset=".45" stopColor="#1b6aa5" /><stop offset="1" stopColor="#16324f" /></radialGradient>
        </defs>
        <circle cx="22" cy="20" r="20.500" fill="url(#orb)" stroke="#0c1d30" />
        <path d="M5 14C9 3 35 3 39 14c-8 5-26 5-34 0z" fill="#fff" opacity=".3" />
        <path d="M14 9c3-2 5-2 8 0l-2 9c-3-2-6-2-9 0z" fill="#e8602a" />
        <path d="M24 10c3 2 6 2 10 0l-3 9c-3 2-6 2-9 0z" fill="#93c83e" />
        <path d="M10 20c3-2 6-2 9 0l-2 9c-3-2-6-2-9 0z" fill="#39a0dd" />
        <path d="M21 21c3 2 6 2 9 0l-2 9c-3 2-6 2-9 0z" fill="#fac72c" />
      </svg>
    </button>
    <Dots />
    <span className="w-[75px] ml-[5px] whitespace-nowrap">Quick Launch</span>
    <button className="self-start w-[18px] text-white text-[16px] leading-[14px]">»</button>
    <span className="ml-[5px] flex"><Dots /></span>
    <div className="flex gap-[4px] ml-[7px]">
      <button className={`${TASK} bg-gradient-to-b from-[#777] via-[#3b3b3b] to-[#2a2a2a]`}><Svg><path d="M1 2l5-1v14l-5-1z" fill="#f0d37a" /><path d="M6 3h8v12H6z" fill="#e2b95a" /><path d="M8 11c0-4 1-6 3-6V2l4 5-4 4V8c-1 0-2 1-3 3z" fill="#45b53c" /></Svg>C:...</button>
      <button className={`${TASK} bg-gradient-to-b from-[#2f2f2f] to-black`}><Svg><ExcelMark /></Svg>M...</button>
      <button className={`${TASK} bg-gradient-to-b from-[#777] via-[#3b3b3b] to-[#2a2a2a]`}><Svg><path d="M6.500 3.500h9v12h-9z" fill="#fff" stroke="#3f67ad" /><rect x=".5" y=".5" width="11" height="11" fill="#e9f0fc" stroke="#2b57a7" /><path d="M2.500 3l2 6 1.500-4 1.500 4 2-6" stroke="#2b57a7" strokeWidth="1.500" /></Svg>В...</button>
    </div>
    <span className="ml-[9px] flex"><Dots /></span>
    <span className="ml-[6px] w-[79px] whitespace-nowrap">Рабочий стол</span>
    <button className="self-start w-[18px] text-white text-[16px] leading-[14px]">»</button>
    <span className="ml-[3px] flex"><Dots /></span>
    <span className="ml-[5px]">Ссылки</span>
    <div className="ml-auto flex items-center pr-[8px]">
      <Dots />
      <span className="ml-[8px] w-[22px]">EN</span>
      <svg className="w-[15px] h-[15px]" viewBox="0 0 15 15"><circle cx="7.500" cy="7.500" r="7" fill="#1a35c4" stroke="#cfd6f4" /><path d="M5 6c0-3 5-3 5 0 0 1.500-2.500 1.500-2.500 3.500M7.500 10.500v2" stroke="#fff" strokeWidth="1.500" fill="none" /></svg>
      <svg className="ml-[9px] w-[9px] h-[17px]" viewBox="0 0 9 17"><path d="M3.500.5h5v3h-5zM.5 3.500h5v3h-5z" fill="#444" stroke="#fff" /><path d="M2 13h6l-3 3z" fill="#fff" /></svg>
      <div className="flex ml-[24px] gap-[2px]">
        <Svg><path d="M8 0l6 2c0 7-1 11-6 14C3 13 2 9 2 2z" fill="#c33" stroke="#eee" /><path d="M5 4l6 6M11 4l-6 6" stroke="#fff" strokeWidth="2" /></Svg>
        <Svg><rect y="3" width="12" height="9" fill="#1c8f9c" stroke="#dff" /><rect x="9" width="6" height="6" fill="#e6df66" /><rect x="9" y="8" width="6" height="7" fill="#fff" /><rect x="11" y="10" width="3" height="3" fill="#e2602b" /></Svg>
        <Svg><path d="M4 8l4-7h7l-3 7z" fill="#4fd0e8" stroke="#223" /><path d="M1 8h14l-3 6H1z" fill="#cfd3d8" stroke="#444" /></Svg>
        <Svg><path d="M1 2v10M5 2v10M9 2v10M13 2v6M0 4h16M0 8h12M0 12h8" stroke="#8d949c" strokeWidth="1.500" /><circle cx="11.500" cy="11" r="4.500" fill="#f0a21e" stroke="#8a5a0c" /><path d="M11.500 8.500v3M11.500 12.500v1.500" stroke="#000" strokeWidth="1.500" /></Svg>
      </div>
      <div className="flex ml-[10px] gap-[2px] mr-[6px]">
        <Svg><path d="M1 4h7v4L6 10v5H4v-5L1 8zM3 1v3M6 1v3" fill="#fff" stroke="#fff" /><rect x="9.500" y="2.500" width="5" height="12" fill="#8fdc8a" stroke="#fff" /></Svg>
        <Svg><path d="M5.500 1.500h9v7h-9zM1.500 5.500h9v7h-9z" fill="#333" stroke="#fff" /><path d="M8 8l6 6M14 8l-6 6" stroke="#e01818" strokeWidth="2.500" /></Svg>
        <Svg><path d="M0 5h3l4-4v14l-4-4H0z" fill="#fff" /><path d="M9 5c1 2 1 4 0 6M11 3c2 3 2 7 0 10M13.500 2c2.500 4 2.500 8 0 12" stroke="#bfe8bf" /></Svg>
      </div>
      <time className="w-[32px] whitespace-nowrap">11:44</time>
    </div>
  </footer>
);

const PANES = ['w-[34px]', 'w-[112px]', 'w-[26px]', 'w-[30px]', 'w-[26px]', 'w-[29px]', 'w-[26px]', 'w-[33px]'];

const App: React.FC = () => (
  <div className="min-w-[1280px] bg-[#f0f0f0] text-black font-['Roboto','Noto_Sans',sans-serif] overflow-hidden">
    <Header />
    <main><Sheet /><div className="font-['Open_Sans','Noto_Sans',sans-serif]"><TabBar /></div></main>
    <div className="bg-gradient-to-r from-[#9ebbf2] via-[#c3d8f8] to-[#c5dafa] pl-[2px] pt-px"><DrawingBar /></div>
    <div className="h-[18px] flex items-center text-[11px] leading-[16px] pl-[5px] pr-[3px]">
      <span className="flex-1">Готово</span>
      <div className="flex gap-px">{PANES.map((w, i) => <span key={i} className={`${w} h-[15px] border border-[#d4d4d4]`}></span>)}</div>
    </div>
    <Taskbar />
  </div>
);

export default App;
